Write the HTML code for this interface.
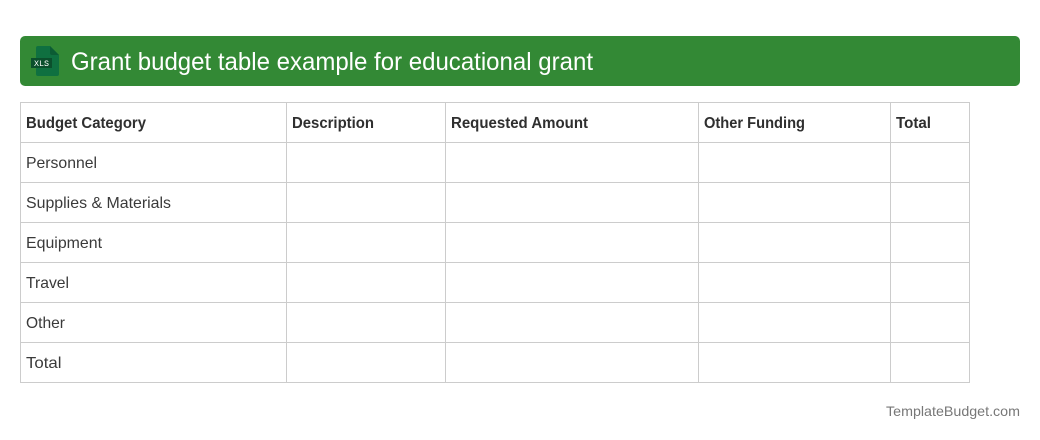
<!DOCTYPE html>
<html>
<head>
<meta charset="utf-8">
<style>
html,body{margin:0;padding:0;background:#fff;width:1040px;height:440px;overflow:hidden}
svg{display:block}
text{font-family:"Liberation Sans",sans-serif}
.h{font-size:16px;font-weight:bold;fill:#2f2f2f}
.c{font-size:16px;fill:#3a3a3a}
</style>
</head>
<body>
<svg width="1040" height="440" viewBox="0 0 1040 440" xmlns="http://www.w3.org/2000/svg">
<rect x="20" y="36" width="1000" height="50" rx="5" fill="#338935"/>
<path d="M38 46h12l9 9v19a2 2 0 0 1-2 2H38a2 2 0 0 1-2-2V48a2 2 0 0 1 2-2z" fill="#0f7040"/>
<path d="M50 46l9 9h-7a2 2 0 0 1-2-2z" fill="#0c5c34"/>
<rect x="31" y="58" width="21" height="10" fill="#0b4f2c"/>
<text x="34" y="66" font-size="8" fill="#fff" textLength="15" lengthAdjust="spacingAndGlyphs" style="font-family:'Liberation Mono',monospace">XLS</text>
<text x="71" y="70" font-size="25" fill="#fff" textLength="522" lengthAdjust="spacingAndGlyphs">Grant budget table example for educational grant</text>
<g stroke="#cccccc" stroke-width="1" fill="none" shape-rendering="crispEdges">
<rect x="20.5" y="102.5" width="949" height="280"/>
<path d="M286.5 102v280M445.5 102v280M698.5 102v280M890.5 102v280"/>
<path d="M20 142.5h950M20 182.5h950M20 222.5h950M20 262.5h950M20 302.5h950M20 342.5h950"/>
</g>
<text class="h" x="26" y="128" textLength="120" lengthAdjust="spacingAndGlyphs">Budget Category</text>
<text class="h" x="292" y="128" textLength="82" lengthAdjust="spacingAndGlyphs">Description</text>
<text class="h" x="451" y="128" textLength="137" lengthAdjust="spacingAndGlyphs">Requested Amount</text>
<text class="h" x="704" y="128" textLength="101" lengthAdjust="spacingAndGlyphs">Other Funding</text>
<text class="h" x="896" y="128" textLength="35" lengthAdjust="spacingAndGlyphs">Total</text>
<text class="c" x="26" y="168" textLength="71" lengthAdjust="spacingAndGlyphs">Personnel</text>
<text class="c" x="26" y="208" textLength="145" lengthAdjust="spacingAndGlyphs">Supplies &amp; Materials</text>
<text class="c" x="26" y="248" textLength="76" lengthAdjust="spacingAndGlyphs">Equipment</text>
<text class="c" x="26" y="288" textLength="43" lengthAdjust="spacingAndGlyphs">Travel</text>
<text class="c" x="26" y="328" textLength="39" lengthAdjust="spacingAndGlyphs">Other</text>
<text class="c" x="26" y="368" textLength="35.5" lengthAdjust="spacingAndGlyphs">Total</text>
<text x="886" y="416" font-size="14" fill="#777777" textLength="134" lengthAdjust="spacingAndGlyphs">TemplateBudget.com</text>
</svg>
</body>
</html>
